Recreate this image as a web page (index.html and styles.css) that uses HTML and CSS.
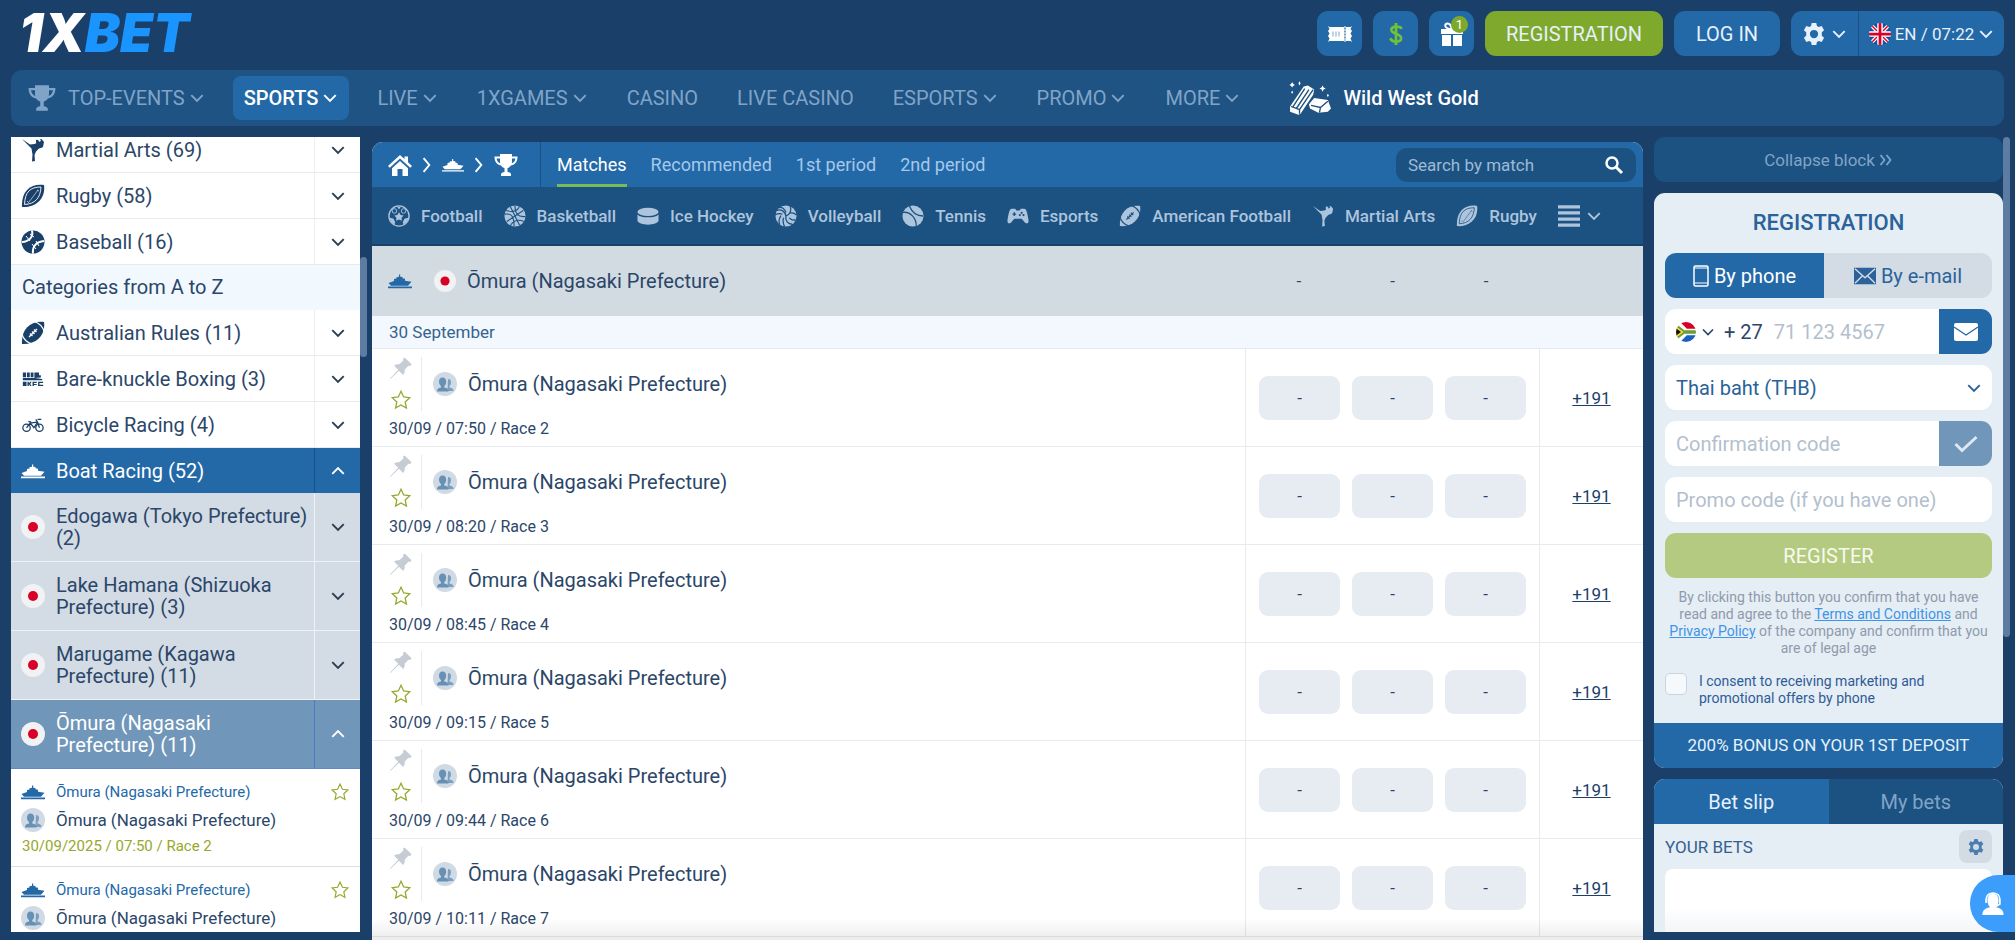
FILE: index.html
```html
<!DOCTYPE html>
<html lang="en">
<head>
    <meta charset="UTF-8">
    <meta name="viewport" content="width=device-width, initial-scale=1">
    <title>Ōmura (Nagasaki Prefecture) - Boat Racing</title>
    <link rel="stylesheet" href="styles.css">
</head>
<body>
    <!-- Icon set -->
    <svg class="sprite" aria-hidden="true">
        <symbol id="i-down" viewBox="0 0 14 14"><path d="M2 4.500l5 5 5-5" fill="none" stroke="currentColor" stroke-width="1.700"/></symbol>
        <symbol id="i-up" viewBox="0 0 14 14"><path d="M2 9.500l5-5 5 5" fill="none" stroke="currentColor" stroke-width="1.700"/></symbol>
        <symbol id="i-right" viewBox="0 0 14 14"><path d="M4 1l5 6-5 6" fill="none" stroke="currentColor" stroke-width="1.700"/></symbol>
        <symbol id="i-cup" viewBox="0 0 24 24"><path fill="currentColor" d="M6 1h12v2.500h5.500c0 5-2 8-6.500 9-1 1.500-2.300 2.300-3.500 2.600V19c2 .3 3.500 1 3.500 2.500V23H7v-1.500c0-1.500 1.500-2.200 3.500-2.500v-3.900c-1.200-.3-2.500-1.100-3.500-2.600-4.500-1-6.500-4-6.500-9H6zM2.600 5.400c.3 2.200 1.300 3.900 3.600 4.800C5.900 8.900 6 7 6 5.400zm18.800 0H18c0 1.600.1 3.500-.2 4.800 2.300-.9 3.300-2.600 3.600-4.800z"/></symbol>
        <symbol id="i-home" viewBox="0 0 24 24"><path fill="currentColor" d="M12 2l4.500 4V3.500h3.500v5.800l4 3.700-1.700 1.800L12 5.600 1.700 14.800 0 13zM12 8l8 7.200V23h-5.500v-7h-5v7H4v-7.800z"/></symbol>
        <symbol id="i-ship" viewBox="0 0 24 24"><path fill="currentColor" d="M11 5.500h1.200v2.200l2.300.3v1.300l2.500.4v2.100l6.500.9-3.500 4H3L.5 14l5.500-2V9.900l2.500-.5V8.200l2.500-.4zM0 17.600h24v1.600H0z"/></symbol>
        <symbol id="i-martial" viewBox="0 0 24 24"><path fill="currentColor" d="M1 1l8 5.500 4.500-.5L20 3l-1-1.500 1.500-.5L23 4l-1 5-2 1-2 .5-3 3-1.500 3.500L14 23l-3 .5.500-7-1-6L6 6zM15 2a2 2 0 1 1 .1 3.500z"/></symbol>
        <symbol id="i-rugby" viewBox="0 0 24 24"><path fill="currentColor" d="M23 1C11-1 0 6 1 23 14 24 25 15 23 1z"/><path d="M20 3C9 3 4 8 3.500 20.500 14 20 19.500 14 20 3z" fill="none" stroke="var(--hole)" stroke-width=".9"/><path d="M8 18l9-12M6 17l2 2M16 6l2 1" stroke="var(--hole)" stroke-width=".6"/></symbol>
        <symbol id="i-amfoot" viewBox="0 0 24 24"><path fill="currentColor" d="M23 1C10-1 0 8 1 23 15 24 25 14 23 1z"/><path d="M13 .5c5 1.500 9 5.500 10.500 11M.5 12C2 17.500 6 22 12 23.500M8 16l8-8M9 12.500l2.500 2.500M11 10.500l2.500 2.500M13 8.500l2.500 2.500" fill="none" stroke="var(--hole)" stroke-width="1.300"/></symbol>
        <symbol id="i-baseball" viewBox="0 0 24 24"><circle cx="12" cy="12" r="11.500" fill="currentColor"/><path d="M11 .5c1.500 6-2.500 11-10 11.500M23 11c-7 .5-12 5-11 12.500" fill="none" stroke="var(--hole)" stroke-width="2"/><path d="M5 6l4 5M9 4l4 3M11 14l4 5M15 11l3 5" stroke="var(--hole)"/></symbol>
        <symbol id="i-bkfc" viewBox="-1 0 26 24"><path fill="currentColor" d="M1 5h3.500v5H1zM5.500 5h3v5h-3zM9.500 5h3v5h-3zM13.500 5h5v3h2v2.500l-7 .5zM1 11h13l8 1v1.300H1zM1 15h4v4.500H1zM6 15h1.500v1.700L9 15h1.500l-1.500 2.300 1.500 2.200H9l-1.500-1.800v1.800H6zM11.500 15H16v1.300h-3v1h3v1.200h-3v1h-1.500zM17.500 15H23v1.300h-4v1.900h4v1.300h-5.500z"/></symbol>
        <symbol id="i-bike" viewBox="-1 -1 26 26"><g fill="none" stroke="currentColor" stroke-width="1.400"><circle cx="5" cy="15" r="4"/><circle cx="19" cy="15" r="4"/><path d="M5 15l4-5 4 5 4-6M9 10l7-1M7 8l3 1M15 6l2 3 2 6M17 6h4"/></g></symbol>
        <symbol id="i-football" viewBox="0 0 24 24"><circle cx="12" cy="12" r="11" fill="none" stroke="currentColor" stroke-width="1.500"/><path fill="currentColor" d="M12 8l1.800 2.800 3.200.7-2.200 2.400.3 3.300-3.100-1.300-3.100 1.300.3-3.300L7 11.500l3.200-.7zM2 14l4 1 2 4-1 2c-3-1.500-5-4-5-7zM22 14l-4 1-2 4 1 2c3-1.500 5-4 5-7zM10 2h4l-2 3z"/><circle cx="7" cy="6.500" r="2.500" fill="none" stroke="currentColor"/><circle cx="17" cy="6.500" r="2.500" fill="none" stroke="currentColor"/></symbol>
        <symbol id="i-basket" viewBox="0 0 24 24"><circle cx="12" cy="12" r="11.500" fill="currentColor"/><path d="M3 18L21 6M7 2l10 20M1 10c7-1 10 2 10 13M12 .5c0 9 3 13 11.500 12M2.500 6C9 8 15 7 17 1M21.500 18C16 15 9 17 7 23" fill="none" stroke="var(--hole)" stroke-width="1.200"/></symbol>
        <symbol id="i-puck" viewBox="0 0 24 24"><ellipse cx="12" cy="7.500" rx="11.500" ry="4.500" fill="currentColor"/><path fill="currentColor" d="M.5 10c2 4.500 21 4.500 23 0v7c-1 6-22 6-23 0z"/></symbol>
        <symbol id="i-volley" viewBox="0 0 24 24"><circle cx="12" cy="12" r="11.500" fill="currentColor"/><path d="M12 12C11 7 7 4 1.500 6M12 12c5-2 6-6 4.500-11M12 12c-1 5 2 9 7 9M12 8C10 4 7 2 4 3M8 10c-3-1-5-1-8 1M15.500 9c4-1 6 0 8 2M15.500 14c3 3 5 3 7 2M9.500 14C8 18 9 21 10.500 23.500M6.500 11.500C4 15 4 18 5 21" fill="none" stroke="var(--hole)" stroke-width="1.400"/></symbol>
        <symbol id="i-tennis" viewBox="0 0 24 24"><circle cx="12" cy="12" r="11.500" fill="currentColor"/><path d="M1 8c8-1 15 6 14.500 15.500M8 1c3 7 8 11 15 11" fill="none" stroke="var(--hole)" stroke-width="1.400"/></symbol>
        <symbol id="i-pad" viewBox="0 0 24 24"><path fill="currentColor" d="M5 4h4l1 2h4l1-2h4c2 0 3.500 5 4.500 13 .2 3-2 4-4 2l-3.500-4H8l-3.500 4c-2 2-4.200 1-4-2C1.500 9 3 4 5 4z"/><path d="M6 10h4M8 8v4" stroke="var(--hole)" stroke-width="1.500"/><circle cx="16" cy="8.500" r="1.200" fill="var(--hole)"/><circle cx="18" cy="11" r="1.200" fill="var(--hole)"/><circle cx="14" cy="11" r="1.200" fill="var(--hole)"/></symbol>
        <symbol id="i-list" viewBox="0 0 24 24"><path d="M0 2h24M0 8.700h24M0 15.300h24M0 22h24" stroke="currentColor" stroke-width="3.500"/></symbol>
        <symbol id="i-search" viewBox="0 0 20 20"><circle cx="8" cy="8" r="5.500" fill="none" stroke="currentColor" stroke-width="2.500"/><path d="M12 12l6 6" stroke="currentColor" stroke-width="3"/></symbol>
        <symbol id="i-ticket" viewBox="0 0 24 18"><path fill="currentColor" d="M0 1l1.500 1H16l1-1 1 1h4.500L24 1l-1.500 3L24 6l-1.500 2.500L24 11l-1.500 2.500L24 17l-1.500-1H18l-1 1-1-1H1.500L0 17l1.500-3.500L0 11l1.500-2.500L0 6l1.500-2z"/><path d="M17 2.500v13" stroke="var(--hole)" stroke-width="1.300" stroke-dasharray="2 1"/><path d="M5 6.500v5M8 6.500v5M11 6.500v5" stroke="var(--hole)" stroke-width=".6"/></symbol>
        <symbol id="i-dollar" viewBox="0 0 16 26"><path d="M14 7.500C13 4.500 3 3.500 3 8.500c0 5 10.500 3.500 10.500 9 0 5.500-10.500 4.500-11.500 0M8 1v24" fill="none" stroke="currentColor" stroke-width="3"/></symbol>
        <symbol id="i-gift" viewBox="0 0 24 24"><path fill="currentColor" d="M1 7h22v5H1zM2 13h9v11H2zM13 13h9v11h-9z"/><path d="M11.500 7C4 7 4 1.500 7.500 1.500S11.500 7 11.500 7zM12.500 7C20 7 20 1.500 16.500 1.500S12.500 7 12.500 7z" fill="none" stroke="currentColor" stroke-width="2"/></symbol>
        <symbol id="i-gear" viewBox="0 0 24 24"><path fill="currentColor" fill-rule="evenodd" d="M9.500 0h5l.7 3.300 2 1.100L20.400 3.400 23 7.800l-2.500 2.400v3.600l2.500 2.400-2.600 4.400-3.200-1-2 1.100-.7 3.300h-5l-.7-3.300-2-1.100-3.200 1L1 16.200l2.500-2.400v-3.600L1 7.800l2.600-4.400 3.200 1 2-1.100zM12 7.500a4.500 4.500 0 1 0 0 9 4.500 4.500 0 0 0 0-9z"/></symbol>
        <symbol id="i-gold" viewBox="0 0 40 32"><path fill="currentColor" d="M1 24L14 5l4-1 6 4-1 5-12 18-2 1-8-3zM19 22l5-6 13 2 3 8-3 3-9 1-8-4z"/><path d="M2 24l8 3M10 27l13-19M10 27v4M4 24L15 7M7 26L19 8M21 23l9 2 7-6M30 25l-1 5" fill="none" stroke="var(--hole)" stroke-width="1.300"/><path fill="currentColor" d="M3 1l1 1.500L5.500 3.500 4 4.500 3 6 2 4.500.5 3.500 2 2.500zM10 0l1 2-1 2-1-2zM32 4l1 2 2 1-2 1-1 2-1-2-2-1 2-1zM3 9l1 1.500L3 12l-1-1.500zM37 12l1 1.500-1 1.500-1-1.500z"/></symbol>
        <symbol id="i-pin" viewBox="0 0 24 24"><path fill="currentColor" d="M16 .5L23.500 8 22 9.800l-2-.3-4 4.500c.4 2.200-.2 4-1.700 5.500l-4.600-4.600L.5 24l-.5-.5 9-9.500-4.500-4.500C6 8 8 7.500 10 8l4.500-4-.3-2z"/></symbol>
        <symbol id="i-star" viewBox="0 0 24 24"><path d="M12 2.500l2.900 6.200 6.600.8-4.900 4.600 1.300 6.700L12 17.500l-5.900 3.300 1.300-6.700L2.500 9.500l6.600-.8z" fill="none" stroke="currentColor" stroke-width="1.400"/></symbol>
        <symbol id="i-team" viewBox="0 0 24 24"><circle cx="12" cy="12" r="12" fill="#cfdae4"/><path fill="#7b9fbf" d="M15 7a3 3 0 0 1 3 3c0 2-.5 3-1.500 4v1.500c3 .5 4 1.500 4 3.500h-6z"/><path fill="#6790b5" d="M9.500 5.500c2.500 0 3.700 1.700 3.700 4s-.7 3.700-1.900 4.500v1.500c3.200.5 4.200 1.500 4.200 4H4c0-2.500 1-3.500 4-4V14c-1.200-.8-2-2.200-2-4.500s1.200-4 3.500-4z"/></symbol>
        <symbol id="i-jp" viewBox="0 0 24 24"><circle cx="12" cy="12" r="12" fill="#f0f2f4"/><circle cx="12" cy="12" r="5" fill="#d80027"/></symbol>
        <symbol id="i-uk" viewBox="0 0 24 24"><path fill="#1b4da0" d="M0 0h24v24H0z"/><path d="M2 2l20 20M22 2L2 22" stroke="#fff" stroke-width="4"/><path d="M2 2l20 20M22 2L2 22" stroke="#d80027" stroke-width="1.500"/><path d="M12 0v24M0 12h24" stroke="#fff" stroke-width="6"/><path d="M12 0v24M0 12h24" stroke="#d80027" stroke-width="3"/></symbol>
        <symbol id="i-za" viewBox="0 0 24 24"><path fill="#fff" d="M0 0h24v24H0z"/><path fill="#d80027" d="M5 0h19v8H13z"/><path fill="#1b5fc0" d="M5 24h19v-8H13z"/><path fill="#6a9f35" d="M0 2l10 8h14v4H10L0 22z"/><path fill="#ffda44" d="M0 5l9 7-9 7z"/><path fill="#111" d="M0 7.500L6 12l-6 4.500z"/></symbol>
        <symbol id="i-phone" viewBox="0 0 16 22"><rect x="1" y="1" width="14" height="20" rx="1.500" fill="none" stroke="currentColor" stroke-width="1.500"/><path d="M1 3h14M1 18h14" stroke="currentColor"/></symbol>
        <symbol id="i-mail" viewBox="0 0 24 18"><path fill="currentColor" d="M0 0h24v18H0z"/><path d="M1 1l11 10L23 1M1 17l8-8M23 17l-8-8" fill="none" stroke="var(--hole)" stroke-width="1.500"/></symbol>
        <symbol id="i-letter" viewBox="0 0 24 18"><rect width="24" height="18" rx="2" fill="currentColor"/><path d="M0 4l12 8 12-8" fill="none" stroke="var(--hole)" stroke-width="1.200"/></symbol>
        <symbol id="i-check" viewBox="0 0 24 18"><path d="M1.500 9l6.500 6.500L22.500 2" fill="none" stroke="currentColor" stroke-width="3"/></symbol>
        <symbol id="i-more" viewBox="0 0 14 14"><path d="M1.500 2l4 5-4 5M7.500 2l4 5-4 5" fill="none" stroke="currentColor" stroke-width="1.800"/></symbol>
        <symbol id="i-agent" viewBox="0 0 24 26"><path fill="currentColor" d="M12 2c4 0 6 3 6 7 0 3-1 6-3 7.500 5 .8 8.500 3 8.500 8.500H.5c0-5.500 3.500-7.700 8.500-8.500C7 15 6 12 6 9c0-4 2-7 6-7z"/><path d="M4.500 12V8c0-9 15-9 15 0v5l-5 3" fill="none" stroke="currentColor" stroke-width="1.800"/></symbol>
    </svg>

    <header class="top">
        <a class="logo" href="#" aria-label="1XBET home">1X<span>BET</span></a>
        <div class="top-actions">
            <button class="btn square" aria-label="Coupon"><svg class="ic-24"><use href="#i-ticket"/></svg></button>
            <button class="btn square green" aria-label="Payments"><svg class="ic-24"><use href="#i-dollar"/></svg></button>
            <button class="btn square" aria-label="Bonuses"><svg class="ic-24"><use href="#i-gift"/></svg><span class="badge">1</span></button>
            <button class="btn primary">REGISTRATION</button>
            <button class="btn login">LOG IN</button>
            <div class="btn-group">
                <button class="btn" aria-label="Settings"><svg class="ic-22"><use href="#i-gear"/></svg><svg class="ic-16"><use href="#i-down"/></svg></button>
                <button class="btn lang"><svg class="ic-22 round"><use href="#i-uk"/></svg>EN / 07:22<svg class="ic-16"><use href="#i-down"/></svg></button>
            </div>
        </div>
    </header>

    <nav class="menu">
        <a href="#" class="with-icon"><svg class="ic-28"><use href="#i-cup"/></svg>TOP-EVENTS<svg class="ic-16"><use href="#i-down"/></svg></a>
        <a href="#" class="active">SPORTS<svg class="ic-16"><use href="#i-down"/></svg></a>
        <a href="#">LIVE<svg class="ic-16"><use href="#i-down"/></svg></a>
        <a href="#">1XGAMES<svg class="ic-16"><use href="#i-down"/></svg></a>
        <a href="#">CASINO</a>
        <a href="#">LIVE CASINO</a>
        <a href="#">ESPORTS<svg class="ic-16"><use href="#i-down"/></svg></a>
        <a href="#">PROMO<svg class="ic-16"><use href="#i-down"/></svg></a>
        <a href="#">MORE<svg class="ic-16"><use href="#i-down"/></svg></a>
        <a href="#" class="promo"><svg class="ic-gold"><use href="#i-gold"/></svg>Wild West Gold</a>
    </nav>

    <div class="layout">
        <aside class="sports">
            <div class="sports-list" id="sportsList">
                <div class="sport"><a href="#"><svg class="ic-24"><use href="#i-martial"/></svg>Martial Arts (69)</a><button aria-label="Expand Martial Arts"><svg class="ic-16"><use href="#i-down"/></svg></button></div>
                <div class="sport"><a href="#"><svg class="ic-24"><use href="#i-rugby"/></svg>Rugby (58)</a><button aria-label="Expand Rugby"><svg class="ic-16"><use href="#i-down"/></svg></button></div>
                <div class="sport"><a href="#"><svg class="ic-24"><use href="#i-baseball"/></svg>Baseball (16)</a><button aria-label="Expand Baseball"><svg class="ic-16"><use href="#i-down"/></svg></button></div>
                <h2 class="sports-title">Categories from A to Z</h2>
                <div class="sport"><a href="#"><svg class="ic-24"><use href="#i-amfoot"/></svg>Australian Rules (11)</a><button aria-label="Expand Australian Rules"><svg class="ic-16"><use href="#i-down"/></svg></button></div>
                <div class="sport"><a href="#"><svg class="ic-24"><use href="#i-bkfc"/></svg>Bare-knuckle Boxing (3)</a><button aria-label="Expand Bare-knuckle Boxing"><svg class="ic-16"><use href="#i-down"/></svg></button></div>
                <div class="sport"><a href="#"><svg class="ic-24"><use href="#i-bike"/></svg>Bicycle Racing (4)</a><button aria-label="Expand Bicycle Racing"><svg class="ic-16"><use href="#i-down"/></svg></button></div>
                <div class="sport open"><a href="#"><svg class="ic-24"><use href="#i-ship"/></svg>Boat Racing (52)</a><button aria-label="Collapse Boat Racing"><svg class="ic-16"><use href="#i-up"/></svg></button></div>
                <div class="sport league"><a href="#"><svg class="ic-24"><use href="#i-jp"/></svg><span>Edogawa (Tokyo Prefecture) (2)</span></a><button aria-label="Expand Edogawa"><svg class="ic-16"><use href="#i-down"/></svg></button></div>
                <div class="sport league"><a href="#"><svg class="ic-24"><use href="#i-jp"/></svg><span>Lake Hamana (Shizuoka Prefecture) (3)</span></a><button aria-label="Expand Lake Hamana"><svg class="ic-16"><use href="#i-down"/></svg></button></div>
                <div class="sport league"><a href="#"><svg class="ic-24"><use href="#i-jp"/></svg><span>Marugame (Kagawa Prefecture) (11)</span></a><button aria-label="Expand Marugame"><svg class="ic-16"><use href="#i-down"/></svg></button></div>
                <div class="sport league current"><a href="#"><svg class="ic-24"><use href="#i-jp"/></svg><span>Ōmura (Nagasaki Prefecture) (11)</span></a><button aria-label="Collapse Ōmura"><svg class="ic-16"><use href="#i-up"/></svg></button></div>
                <div id="sideRaces"></div>
            </div>
            <div class="scrollbar side-bar"></div>
        </aside>

        <main class="matches">
            <div class="tabs">
                <div class="crumbs">
                    <a href="#" aria-label="Home"><svg class="ic-24"><use href="#i-home"/></svg></a>
                    <svg class="ic-16"><use href="#i-right"/></svg>
                    <a href="#" aria-label="Boat Racing"><svg class="ic-22"><use href="#i-ship"/></svg></a>
                    <svg class="ic-16"><use href="#i-right"/></svg>
                    <a href="#" aria-label="Championships"><svg class="ic-24"><use href="#i-cup"/></svg></a>
                </div>
                <div class="tab-links">
                    <a href="#" class="active">Matches</a>
                    <a href="#">Recommended</a>
                    <a href="#">1st period</a>
                    <a href="#">2nd period</a>
                </div>
                <form class="search">
                    <input type="text" placeholder="Search by match" aria-label="Search by match">
                    <button type="button" aria-label="Search"><svg class="ic-20"><use href="#i-search"/></svg></button>
                </form>
            </div>

            <nav class="sport-links">
                <a href="#"><svg class="ic-22"><use href="#i-football"/></svg>Football</a>
                <a href="#"><svg class="ic-22"><use href="#i-basket"/></svg>Basketball</a>
                <a href="#"><svg class="ic-22"><use href="#i-puck"/></svg>Ice Hockey</a>
                <a href="#"><svg class="ic-22"><use href="#i-volley"/></svg>Volleyball</a>
                <a href="#"><svg class="ic-22"><use href="#i-tennis"/></svg>Tennis</a>
                <a href="#"><svg class="ic-22"><use href="#i-pad"/></svg>Esports</a>
                <a href="#"><svg class="ic-22"><use href="#i-amfoot"/></svg>American Football</a>
                <a href="#"><svg class="ic-22"><use href="#i-martial"/></svg>Martial Arts</a>
                <a href="#"><svg class="ic-22"><use href="#i-rugby"/></svg>Rugby</a>
                <button aria-label="All sports"><svg class="ic-22"><use href="#i-list"/></svg><svg class="ic-16"><use href="#i-down"/></svg></button>
            </nav>

            <table class="races">
                <thead>
                    <tr>
                        <th><div class="league-name"><svg class="ic-24"><use href="#i-ship"/></svg><svg class="ic-22"><use href="#i-jp"/></svg>Ōmura (Nagasaki Prefecture)</div></th>
                        <th class="col-odds"><div class="odds"><span>-</span><span>-</span><span>-</span></div></th>
                        <th class="col-more"></th>
                    </tr>
                </thead>
                <tbody id="races">
                    <tr class="date"><td colspan="3">30 September</td></tr>
                </tbody>
            </table>
        </main>

        <aside class="right">
            <button class="collapse">Collapse block<svg class="ic-14"><use href="#i-more"/></svg></button>

            <section class="register">
                <form>
                    <h2>REGISTRATION</h2>
                    <div class="switch">
                        <button type="button" class="active"><svg class="ic-phone"><use href="#i-phone"/></svg>By phone</button>
                        <button type="button"><svg class="ic-22"><use href="#i-mail"/></svg>By e-mail</button>
                    </div>
                    <div class="field">
                        <button type="button" class="country"><svg class="ic-20 round"><use href="#i-za"/></svg><svg class="ic-14"><use href="#i-down"/></svg>+ 27</button>
                        <input type="tel" placeholder="71 123 4567" aria-label="Phone number">
                        <button type="button" class="side-btn" aria-label="Send code"><svg class="ic-24"><use href="#i-letter"/></svg></button>
                    </div>
                    <div class="field">
                        <select aria-label="Currency"><option>Thai baht (THB)</option></select>
                        <svg class="ic-16 arrow"><use href="#i-down"/></svg>
                    </div>
                    <div class="field">
                        <input type="text" placeholder="Confirmation code" aria-label="Confirmation code">
                        <button type="button" class="side-btn disabled" aria-label="Confirm"><svg class="ic-24"><use href="#i-check"/></svg></button>
                    </div>
                    <div class="field">
                        <input type="text" placeholder="Promo code (if you have one)" aria-label="Promo code">
                    </div>
                    <button type="button" class="submit">REGISTER</button>
                    <p class="legal">By clicking this button you confirm that you have read and agree to the <a href="#">Terms and Conditions</a> and <a href="#">Privacy Policy</a> of the company and confirm that you are of legal age</p>
                    <div class="consent">
                        <input type="checkbox" id="consent">
                        <label for="consent">I consent to receiving marketing and promotional offers by phone</label>
                    </div>
                </form>
                <a href="#" class="bonus">200% BONUS ON YOUR 1ST DEPOSIT</a>
            </section>

            <section class="slip">
                <div class="slip-tabs">
                    <button class="active">Bet slip</button>
                    <button>My bets</button>
                </div>
                <div class="slip-head">YOUR BETS<button aria-label="Bet slip settings"><svg class="ic-16"><use href="#i-gear"/></svg></button></div>
                <div class="slip-box"></div>
            </section>
            <div class="scrollbar right-bar"></div>
        </aside>
    </div>

    <button class="chat" aria-label="Support chat"><svg class="ic-24"><use href="#i-agent"/></svg></button>

    <script src="script.js"></script>
</body>
</html>
```
FILE: styles.css
```css
* {
    box-sizing: border-box;
}
body {
    --hole: #1c5281;
    margin: 0;
    height: 100vh;
    padding: 0 11px;
    display: flex;
    flex-direction: column;
    overflow: hidden;
    position: relative;
    background: #1a4069;
    color: #2b4669;
    font-family: Roboto, "Liberation Sans", sans-serif;
    font-size: 20px;
}
a {
    color: inherit;
    text-decoration: none;
}
button, input, select {
    font: inherit;
    color: inherit;
    border: none;
    padding: 0;
    background: none;
}
button {
    cursor: pointer;
}
svg {
    flex: none;
    display: block;
}
.sprite {
    position: absolute;
    width: 0;
    height: 0;
}
.ic-14 { width: 14px; height: 14px; }
.ic-16 { width: 16px; height: 16px; }
.ic-20 { width: 20px; height: 20px; }
.ic-22 { width: 22px; height: 22px; }
.ic-24 { width: 24px; height: 24px; }
.ic-28 { width: 28px; height: 28px; }
.ic-gold { width: 42px; height: 34px; }
.ic-phone { width: 16px; height: 22px; }
.round { border-radius: 50%; }

/* Header */
.top {
    flex: none;
    height: 70px;
    padding: 11px 0 14px 8px;
    display: flex;
    align-items: center;
    justify-content: space-between;
}
.logo {
    font-family: Inter, sans-serif;
    font-size: 53px;
    line-height: 45px;
    font-weight: 900;
    font-style: italic;
    color: #fff;
}
.logo span {
    color: #1a94ff;
}
.top-actions {
    display: flex;
    gap: 11px;
}
.btn {
    --hole: #2369a7;
    height: 45px;
    border-radius: 11px;
    background: #2369a7;
    color: #e6f1fc;
    display: flex;
    align-items: center;
    justify-content: center;
    gap: 6px;
}
.btn.square {
    width: 45px;
    position: relative;
    color: #fff;
}
.btn.green {
    color: #6fc03a;
}
.btn.primary {
    width: 178px;
    background: #7fa92c;
}
.btn.login {
    width: 106px;
}
.badge {
    position: absolute;
    top: 5px;
    right: 6px;
    width: 17px;
    height: 17px;
    border-radius: 50%;
    background: #7fa92c;
    color: #fff;
    font-size: 13px;
    line-height: 17px;
}
.btn-group {
    display: flex;
}
.btn-group .btn {
    width: 67px;
    border-radius: 11px 0 0 11px;
}
.btn-group .btn.lang {
    width: 146px;
    border-left: 1px solid #1a5288;
    border-radius: 0 11px 11px 0;
    font-size: 17px;
    gap: 4px;
}

/* Main menu */
.menu {
    flex: none;
    height: 56px;
    padding: 6px;
    display: flex;
    border-radius: 11px;
    background: #1e5384;
    color: #80a4c8;
}
.menu a {
    height: 44px;
    margin-right: 17px;
    padding: 0 11px;
    display: flex;
    align-items: center;
    gap: 4px;
    border-radius: 8px;
    white-space: nowrap;
}
.menu a.with-icon svg:first-child {
    margin-right: 8px;
}
.menu a.active {
    background: #2369a7;
    color: #fff;
    font-weight: 500;
}
.menu a.promo {
    margin-left: 10px;
    gap: 12px;
    color: #fff;
    font-weight: 500;
}

/* Columns */
.layout {
    flex: 1;
    min-height: 0;
    padding: 11px 1px 0 0;
    display: grid;
    grid-template-columns: 349px minmax(0, 1fr) 349px;
    column-gap: 12px;
}
.scrollbar {
    position: absolute;
    right: -7px;
    width: 7px;
    border-radius: 4px;
    background: #5c7da1;
}
.side-bar {
    top: 120px;
    height: 100px;
}
.right-bar {
    top: 0;
    height: 500px;
}

/* Left column */
.sports {
    position: relative;
    min-height: 0;
    margin-bottom: 8px;
}
.sports-list {
    --hole: #fff;
    height: 100%;
    overflow: hidden;
    background: #fff;
}
.sport {
    height: 46px;
    display: grid;
    grid-template-columns: 1fr 46px;
    border-bottom: 1px solid #e8ebee;
}
.sport a {
    padding-left: 10px;
    display: flex;
    align-items: center;
    gap: 11px;
    line-height: 22px;
}
.sport a svg {
    color: #1a4069;
}
.sport button {
    display: grid;
    place-items: center;
    border-left: 1px solid #eceff2;
    color: #2b3e54;
}
.sports-title {
    height: 45px;
    margin: 0;
    padding-left: 11px;
    background: #f1f8fe;
    font-size: 20px;
    line-height: 45px;
    font-weight: 400;
}
.sport.open {
    height: 45px;
    border: none;
    background: #2369a7;
    color: #fff;
}
.sport.open a svg, .sport.open button {
    color: #fff;
}
.sport.open button {
    border-color: #1a5288;
}
.sport.league {
    height: 69px;
    background: #d3dbe4;
    border-color: #eef2f6;
}
.sport.league button {
    border-color: #eef2f6;
}
.sport.league.current {
    background: #7096b9;
    border-color: #5f86cf;
    color: #fff;
}
.sport.league.current button {
    border-color: #4a7dc4;
    color: #fff;
}
.side-race {
    height: 98px;
    padding: 11px 10px 0;
    border-bottom: 1px solid #dadfe4;
}
.side-race div {
    display: flex;
    align-items: center;
    gap: 11px;
    height: 24px;
    margin-bottom: 4px;
    font-size: 17px;
}
.side-race .name {
    color: #2369a7;
    font-size: 15px;
}
.side-race .name button {
    margin-left: auto;
}
.side-race time {
    display: block;
    margin-left: 1px;
    color: #96a82c;
    font-size: 15px;
    line-height: 20px;
}
.star {
    color: #96a82c;
}
.star svg {
    width: 20px;
    height: 20px;
}

/* Middle column */
.matches {
    position: relative;
    min-height: 0;
    margin-top: 5px;
    margin-right: -1px;
    overflow: hidden;
    background: #fff;
    border-radius: 11px 11px 0 0;
}
.matches::after {
    content: "";
    position: absolute;
    left: 0;
    right: 0;
    bottom: 0;
    height: 22px;
    background: linear-gradient(transparent, rgba(0, 0, 0, 0.08));
}
.tabs {
    height: 45px;
    display: flex;
    align-items: center;
    background: #2369a8;
    color: #a5c8ea;
    font-size: 18px;
}
.crumbs {
    height: 100%;
    width: 169px;
    padding-left: 16px;
    display: flex;
    align-items: center;
    gap: 7px;
    border-right: 1px solid #1a5288;
    color: #fff;
}
.tab-links {
    height: 100%;
    padding-left: 16px;
    display: flex;
    gap: 24px;
}
.tab-links a {
    height: 45px;
    line-height: 45px;
}
.tab-links a.active {
    border-bottom: 3px solid #77bb5b;
    color: #fff;
}
.search {
    width: 240px;
    height: 34px;
    margin-left: auto;
    margin-right: 7px;
    padding: 0 12px;
    display: flex;
    align-items: center;
    justify-content: space-between;
    border-radius: 11px;
    background: #1c5281;
}
.search input {
    width: 180px;
    outline: none;
    font-size: 17px;
}
.search input::placeholder {
    color: #9dbad6;
    opacity: 1;
}
.search button {
    color: #fff;
}
.sport-links {
    height: 59px;
    padding-left: 16px;
    display: flex;
    align-items: center;
    gap: 21px;
    border-bottom: 2px solid #1a4069;
    background: #1c5281;
    color: #adc4dd;
    font-size: 17px;
    font-weight: 500;
    white-space: nowrap;
}
.sport-links a {
    display: flex;
    align-items: center;
    gap: 11px;
}
.sport-links button {
    display: flex;
    align-items: center;
    gap: 6px;
}
.races {
    width: 100%;
    table-layout: fixed;
    border-spacing: 0;
}
.races th, .races td {
    padding: 0;
    text-align: left;
    font-weight: 400;
}
.races th {
    height: 70px;
    background: #d3dbe2;
}
.league-name {
    padding-left: 16px;
    display: flex;
    align-items: center;
    gap: 11px;
}
.league-name svg:first-child {
    margin-right: 11px;
    color: #2369a7;
}
.col-odds {
    width: 295px;
}
.col-more {
    width: 103px;
}
.odds {
    padding: 0 13px;
    display: grid;
    grid-template-columns: repeat(3, 1fr);
    gap: 12px;
    text-align: center;
    font-size: 17px;
}
.races tr.date td {
    height: 33px;
    padding-left: 17px;
    border-bottom: 1px solid #e8ebee;
    background: #f2f8fd;
    color: #36628f;
    font-size: 17px;
}
.race td {
    height: 98px;
    border-bottom: 1px solid #e8ebee;
}
.race .cell-odds {
    border-left: 1px solid #e8ebee;
    border-right: 1px solid #e8ebee;
}
.race .cell-more {
    text-align: center;
    font-size: 17px;
}
.race .cell-more a {
    color: #1a4069;
    text-decoration: underline;
}
.race .odds button {
    height: 44px;
    border-radius: 9px;
    background: #e6ecf2;
}
.race-body {
    padding-left: 17px;
    display: grid;
    grid-template-columns: 33px 1fr;
    row-gap: 8px;
}
.marks {
    height: 54px;
    padding-right: 8px;
    display: grid;
    justify-items: center;
    align-content: space-between;
    border-right: 1px solid #e8ebee;
    color: #c6ccd3;
}
.marks svg {
    width: 22px;
    height: 22px;
}
.marks .star {
    color: #96a82c;
}
.race-name {
    height: 54px;
    padding-left: 11px;
    display: flex;
    align-items: center;
    gap: 11px;
}
.race-body time {
    grid-column: 1 / -1;
    font-size: 16px;
    line-height: 20px;
}

/* Right column */
.right {
    position: relative;
    min-height: 0;
    margin-bottom: 8px;
    display: flex;
    flex-direction: column;
    gap: 11px;
}
.collapse {
    flex: none;
    height: 45px;
    display: flex;
    align-items: center;
    justify-content: center;
    gap: 4px;
    border-radius: 11px;
    background: #1c5281;
    color: #80a4c8;
    font-size: 17px;
}
.register {
    flex: none;
    overflow: hidden;
    border-radius: 11px;
    background: #e5edf5;
}
.register form {
    height: 530px;
    padding: 15px 11px 0;
    display: flex;
    flex-direction: column;
    gap: 11px;
}
.register h2 {
    margin: 0 0 4px;
    color: #2a6299;
    font-size: 22px;
    line-height: 30px;
    font-weight: 500;
    text-align: center;
}
.switch {
    height: 45px;
    display: grid;
    grid-template-columns: 159px 1fr;
    overflow: hidden;
    border-radius: 11px;
}
.switch button {
    --hole: #d3dbe4;
    display: flex;
    align-items: center;
    justify-content: center;
    gap: 5px;
    background: #d3dbe4;
    color: #2a6299;
}
.switch button.active {
    background: #2369a7;
    color: #fff;
}
.field {
    position: relative;
    height: 45px;
    display: flex;
    overflow: hidden;
    border-radius: 11px;
    background: #fff;
}
.field input {
    flex: 1;
    min-width: 0;
    padding-left: 11px;
    outline: none;
}
.field input::placeholder {
    color: #b3bfcd;
    opacity: 1;
}
.field select {
    width: 100%;
    padding-left: 11px;
    appearance: none;
    outline: none;
    color: #2a6299;
}
.field .arrow {
    position: absolute;
    right: 10px;
    top: 15px;
    color: #2a6299;
    pointer-events: none;
}
.country {
    padding-left: 11px;
    display: flex;
    align-items: center;
    gap: 5px;
    white-space: nowrap;
}
.country .ic-14 {
    margin-right: 4px;
}
.side-btn {
    --hole: #2369a7;
    width: 53px;
    display: grid;
    place-items: center;
    background: #2369a7;
    color: #fff;
}
.side-btn.disabled {
    background: #7096b9;
    color: #dfe8f1;
}
.side-btn svg {
    height: 18px;
}
.submit {
    height: 45px;
    border-radius: 11px;
    background: #b4ca80;
    color: #f7faee;
}
.legal {
    margin: 0;
    color: #8e9bab;
    font-size: 14px;
    line-height: 17px;
    text-align: center;
}
.legal a {
    color: #3d94e8;
    text-decoration: underline;
}
.consent {
    margin-top: 5px;
    display: flex;
    gap: 12px;
    color: #2f5c96;
    font-size: 14px;
    line-height: 17px;
}
.consent input {
    flex: none;
    width: 22px;
    height: 22px;
    margin: 0;
    appearance: none;
    border: 1px solid #c9d4e0;
    border-radius: 5px;
    background: #f6f9fc;
}
.bonus {
    display: block;
    background: #2369a7;
    color: #e6f1fc;
    font-size: 17px;
    line-height: 45px;
    text-align: center;
}
.slip {
    flex: 1;
    min-height: 0;
    overflow: hidden;
    display: flex;
    flex-direction: column;
    border-radius: 11px 11px 0 0;
    background: #e5edf5;
}
.slip-tabs {
    height: 45px;
    display: grid;
    grid-template-columns: 1fr 1fr;
}
.slip-tabs button {
    background: #1c5281;
    color: #80a4c8;
}
.slip-tabs button.active {
    background: #2369a7;
    color: #e6f1fc;
}
.slip-head {
    height: 45px;
    padding: 0 11px;
    display: flex;
    align-items: center;
    justify-content: space-between;
    color: #35608e;
    font-size: 17px;
}
.slip-head button {
    width: 33px;
    height: 33px;
    display: grid;
    place-items: center;
    border-radius: 8px;
    background: #d3dbe4;
    color: #4a7eb0;
}
.slip-box {
    flex: 1;
    margin: 0 11px;
    border-radius: 8px 8px 0 0;
    background: linear-gradient(#fff 60%, #f3f5f7);
}

/* Support chat */
.chat {
    position: absolute;
    right: 0;
    bottom: 8px;
    width: 45px;
    height: 57px;
    padding-left: 11px;
    border-radius: 29px 0 0 29px;
    background: #3c9dfb;
    color: #fff;
}
```
FILE: script.js
```js
const league = 'Ōmura (Nagasaki Prefecture)';
const races = [
    { time: '07:50', name: 'Race 2' },
    { time: '08:20', name: 'Race 3' },
    { time: '08:45', name: 'Race 4' },
    { time: '09:15', name: 'Race 5' },
    { time: '09:44', name: 'Race 6' },
    { time: '10:11', name: 'Race 7' }
];

const table = document.getElementById('races');
races.forEach(race => {
    const row = table.insertRow(-1);
    row.className = 'race';
    row.innerHTML = `
        <td>
            <div class="race-body">
                <div class="marks">
                    <button aria-label="Pin"><svg><use href="#i-pin"/></svg></button>
                    <button class="star" aria-label="Add to favourites"><svg><use href="#i-star"/></svg></button>
                </div>
                <a class="race-name" href="#"><svg class="ic-24"><use href="#i-team"/></svg>${league}</a>
                <time>30/09 / ${race.time} / ${race.name}</time>
            </div>
        </td>
        <td class="cell-odds"><div class="odds"><button>-</button><button>-</button><button>-</button></div></td>
        <td class="cell-more"><a href="#">+191</a></td>`;
});

// The same races, listed under the open league in the left column
document.getElementById('sideRaces').innerHTML = races.slice(0, 2).map(race => `
    <section class="side-race">
        <div class="name"><svg class="ic-24"><use href="#i-ship"/></svg><a href="#">${league}</a><button class="star" aria-label="Add to favourites"><svg><use href="#i-star"/></svg></button></div>
        <div><svg class="ic-24"><use href="#i-team"/></svg>${league}</div>
        <time>30/09/2025 / ${race.time} / ${race.name}</time>
    </section>`).join('');

document.getElementById('sportsList').scrollTop = 10;
```
